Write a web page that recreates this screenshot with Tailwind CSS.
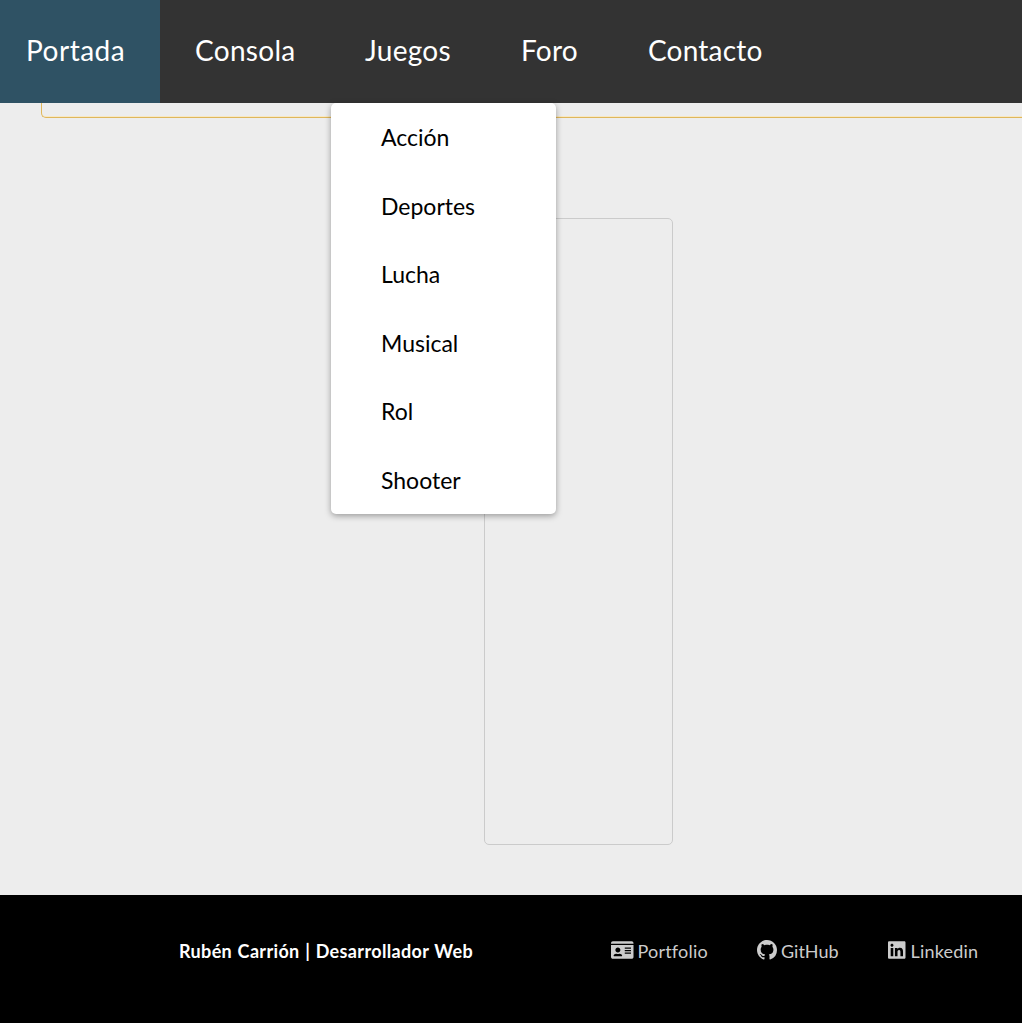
<!DOCTYPE html>
<html lang="es">
<head>
<meta charset="utf-8">
<title>Juegos</title>
<script src="https://cdn.jsdelivr.net/npm/@tailwindcss/browser@4"></script>
</head>
<body class="h-[1023px] overflow-hidden bg-[#ededed] font-['Lato',sans-serif] flex flex-col">
<header class="relative z-10 h-[103px] shrink-0 bg-[#333333]">
  <nav class="flex h-full text-[28px] leading-[100px] text-white whitespace-nowrap">
    <a class="w-[160px] bg-[#2f5264] pl-[26px]"><span class="tracking-[0.5px]">Portada</span></a>
    <a class="w-[171px] pl-[35px]"><span class="tracking-[0.3px]">Consola</span></a>
    <div class="relative w-[155px] pl-[34px]">
      <span class="tracking-[0.3px]">Juegos</span>
      <ul class="absolute left-0 top-[103px] grid h-[411px] w-[225px] grid-rows-6 rounded-[5px] bg-white pl-[50px] text-[23px] leading-[68.2px] text-black shadow-[0_2px_6px_rgba(0,0,0,0.35)]">
        <li>Acción</li>
        <li>Deportes</li>
        <li>Lucha</li>
        <li>Musical</li>
        <li>Rol</li>
        <li>Shooter</li>
      </ul>
    </div>
    <a class="w-[127px] pl-[35px]"><span class="tracking-[0.2px]">Foro</span></a>
    <a class="pl-[35px]"><span class="tracking-[0.2px]">Contacto</span></a>
  </nav>
</header>
<main class="h-[792px] shrink-0">
  <section class="ml-[41px] h-[15px] rounded-bl-[5px] border-b border-l border-[#dfb75c] shadow-[inset_0_-1px_0_#f8e8c4]"></section>
  <section class="mt-[100px] ml-[484px] h-[627px] w-[189px] rounded-[5px] border border-[#cbcbcb]"></section>
</main>
<footer class="flex h-[128px] shrink-0 items-start bg-black pt-[42px] pl-[179px] text-[18px] leading-[28px] whitespace-nowrap text-[#cccccc]">
  <p class="w-[432px] font-bold tracking-[0.35px] [word-spacing:0.8px] text-white">Rubén Carrión | Desarrollador Web</p>
  <a class="flex w-[146px] items-center gap-1">
    <svg class="mb-0.5 h-5 w-[22.5px]" viewBox="0 0 576 512" fill="currentColor"><path fill-rule="evenodd" d="M528 32H48C21.500 32 0 53.500 0 80v16h576V80c0-26.500-21.500-48-48-48zM0 432c0 26.500 21.500 48 48 48h480c26.500 0 48-21.500 48-48V128H0v304zm352-232c0-4.400 3.600-8 8-8h144c4.400 0 8 3.600 8 8v16c0 4.400-3.600 8-8 8H360c-4.400 0-8-3.600-8-8v-16zm0 64c0-4.400 3.600-8 8-8h144c4.400 0 8 3.600 8 8v16c0 4.400-3.600 8-8 8H360c-4.400 0-8-3.600-8-8v-16zm0 64c0-4.400 3.600-8 8-8h144c4.400 0 8 3.600 8 8v16c0 4.400-3.600 8-8 8H360c-4.400 0-8-3.600-8-8v-16zM176 192c35.300 0 64 28.700 64 64s-28.700 64-64 64-64-28.700-64-64 28.700-64 64-64zM67.100 396.200C75.500 370.500 99.600 352 128 352h8.200c12.300 5.100 25.700 8 39.800 8s27.600-2.900 39.800-8h8.200c28.400 0 52.500 18.500 60.900 44.200 3.200 9.900-5.200 19.800-15.600 19.800H82.700c-10.400 0-18.800-10-15.600-19.800z"/></svg>
    <span class="tracking-[0.2px]">Portfolio</span>
  </a>
  <a class="flex w-[131px] items-center gap-1">
    <svg class="mb-0.5 h-5 w-5" viewBox="0 0 16 16" fill="currentColor"><path d="M8 0C3.580 0 0 3.580 0 8c0 3.540 2.290 6.530 5.470 7.590.4.070.55-.17.55-.38 0-.19-.01-.82-.01-1.490-2.010.37-2.530-.49-2.690-.94-.09-.23-.48-.94-.82-1.130-.28-.15-.68-.52-.01-.53.63-.01 1.080.58 1.230.82.72 1.210 1.870.87 2.330.66.07-.52.28-.87.51-1.070-1.780-.2-3.640-.89-3.640-3.950 0-.87.31-1.590.82-2.150-.08-.2-.36-1.020.08-2.120 0 0 .67-.21 2.200.82.64-.18 1.320-.27 2-.27s1.360.09 2 .27c1.530-1.040 2.200-.82 2.200-.82.44 1.100.16 1.920.08 2.120.51.56.82 1.270.82 2.150 0 3.070-1.870 3.750-3.650 3.950.29.25.54.73.54 1.480 0 1.070-.01 1.930-.01 2.200 0 .21.15.46.55.38A8.010 8.010 0 0 0 16 8c0-4.420-3.580-8-8-8z"/></svg>
    <span>GitHub</span>
  </a>
  <a class="flex items-center gap-[5px]">
    <svg class="mb-0.5 h-5 w-[17.5px]" viewBox="0 0 448 512" fill="currentColor"><path d="M416 32H31.900C14.300 32 0 46.500 0 64.300v383.400C0 465.500 14.300 480 31.900 480H416c17.600 0 32-14.500 32-32.300V64.300c0-17.800-14.400-32.300-32-32.300zM135.400 416H69V202.200h66.500V416zm-33.200-243c-21.300 0-38.500-17.300-38.500-38.500S80.900 96 102.200 96c21.200 0 38.500 17.300 38.500 38.500 0 21.300-17.200 38.500-38.500 38.500zm282.100 243h-66.400V312c0-24.800-.5-56.700-34.500-56.700-34.600 0-39.900 27-39.900 54.900V416h-66.400V202.200h63.700v29.200h.9c8.900-16.800 30.600-34.500 62.900-34.500 67.200 0 79.700 44.300 79.700 101.900V416z"/></svg>
    <span class="tracking-[0.2px]">Linkedin</span>
  </a>
</footer>
</body>
</html>
